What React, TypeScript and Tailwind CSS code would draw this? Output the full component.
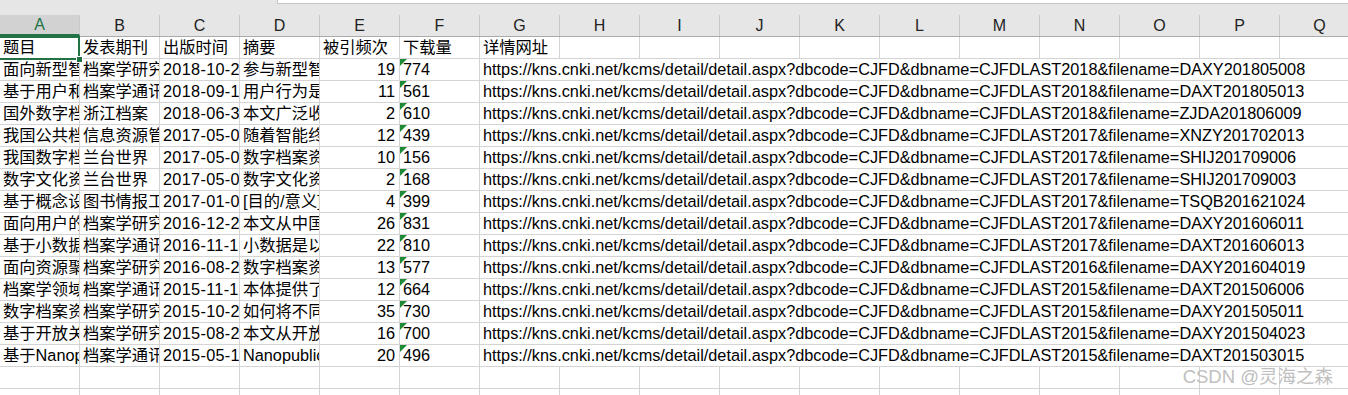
import React from "react";

const cols = ["A","B","C","D","E","F","G","H","I","J","K","L","M","N","O","P","Q"];

type Row = { a: string; b: string; c: string; d: string; e: string; f: string; g: string };

const base = "https://kns.cnki.net/kcms/detail/detail.aspx?dbcode=CJFD&dbname=CJFDLAST";
const rows: Row[] = [
  { a: "面向新型智慧", b: "档案学研究", c: "2018-10-25", d: "参与新型智慧", e: "19", f: "774", g: base + "2018&filename=DAXY201805008" },
  { a: "基于用户和", b: "档案学通讯", c: "2018-09-15", d: "用户行为是", e: "11", f: "561", g: base + "2018&filename=DAXT201805013" },
  { a: "国外数字档", b: "浙江档案", c: "2018-06-30", d: "本文广泛收集", e: "2", f: "610", g: base + "2018&filename=ZJDA201806009" },
  { a: "我国公共档", b: "信息资源管理", c: "2017-05-08", d: "随着智能终端", e: "12", f: "439", g: base + "2017&filename=XNZY201702013" },
  { a: "我国数字档", b: "兰台世界", c: "2017-05-01", d: "数字档案资源", e: "10", f: "156", g: base + "2017&filename=SHIJ201709006" },
  { a: "数字文化资源", b: "兰台世界", c: "2017-05-01", d: "数字文化资源", e: "2", f: "168", g: base + "2017&filename=SHIJ201709003" },
  { a: "基于概念设计", b: "图书情报工作", c: "2017-01-05", d: "[目的/意义]", e: "4", f: "399", g: base + "2017&filename=TSQB201621024" },
  { a: "面向用户的", b: "档案学研究", c: "2016-12-20", d: "本文从中国", e: "26", f: "831", g: base + "2017&filename=DAXY201606011" },
  { a: "基于小数据", b: "档案学通讯", c: "2016-11-15", d: "小数据是以", e: "22", f: "810", g: base + "2017&filename=DAXT201606013" },
  { a: "面向资源聚合", b: "档案学研究", c: "2016-08-20", d: "数字档案资源", e: "13", f: "577", g: base + "2016&filename=DAXY201604019" },
  { a: "档案学领域", b: "档案学通讯", c: "2015-11-15", d: "本体提供了", e: "12", f: "664", g: base + "2015&filename=DAXT201506006" },
  { a: "数字档案资源", b: "档案学研究", c: "2015-10-20", d: "如何将不同", e: "35", f: "730", g: base + "2015&filename=DAXY201505011" },
  { a: "基于开放关联", b: "档案学研究", c: "2015-08-20", d: "本文从开放", e: "16", f: "700", g: base + "2015&filename=DAXY201504023" },
  { a: "基于Nanopub", b: "档案学通讯", c: "2015-05-15", d: "Nanopublication", e: "20", f: "496", g: base + "2015&filename=DAXT201503015" },
];

const cell = "w-[80px] shrink-0 h-full border-r border-[#d4d4d4] overflow-hidden whitespace-nowrap flex items-center";

function TextCell({ children }: { children?: React.ReactNode }) {
  return <div className={cell + " pl-[3px]"}>{children}</div>;
}

function Triangle() {
  return (
    <svg className="absolute left-0 top-0" width="7" height="7" viewBox="0 0 7 7">
      <polygon points="0,0 7,0 0,7" fill="#1e8a35" />
    </svg>
  );
}

export default function App() {
  return (
    <div
      className="relative w-[1348px] h-[395px] overflow-hidden bg-white text-black"
      style={{ fontFamily: '"Liberation Sans", "Noto Sans CJK SC", sans-serif' }}
    >
      {/* formula bar remnant */}
      <div className="flex h-[4px]">
        <div className="w-[277px] bg-[#e6e6e6]" />
        <div className="flex-1 bg-white border-l border-b border-[#c6c6c6]" />
      </div>
      <div className="h-[11px] bg-[#e6e6e6]" />

      {/* column headers */}
      <div className="flex h-[22px] bg-[#e6e6e6] border-b border-[#ababab] text-[16px] text-[#222]">
        {cols.map((c, i) => (
          <div
            key={c}
            className={
              i === 0
                ? "w-[80px] shrink-0 h-full flex items-center justify-center bg-[#d2d2d2] text-[#217346] border-r border-[#c8c8c8] border-b-2 border-b-[#217346]"
                : "w-[80px] shrink-0 h-full flex items-center justify-center border-r border-[#c8c8c8]"
            }
          >
            {c}
          </div>
        ))}
      </div>

      {/* grid */}
      <div className="text-[16.3px] leading-none">
        {/* header row */}
        <div className="flex h-[22px] border-b border-[#d4d4d4]">
          <TextCell>题目</TextCell>
          <TextCell>发表期刊</TextCell>
          <TextCell>出版时间</TextCell>
          <TextCell>摘要</TextCell>
          <TextCell>被引频次</TextCell>
          <TextCell>下载量</TextCell>
          <TextCell>详情网址</TextCell>
          {cols.slice(7).map((c) => (
            <div key={c} className={cell} />
          ))}
        </div>
        {rows.map((r, i) => (
          <div key={i} className="flex h-[22px] border-b border-[#d4d4d4]">
            <TextCell>{r.a}</TextCell>
            <TextCell>{r.b}</TextCell>
            <div className={cell + " pl-[3px] tracking-[0.3px]"}>{r.c}</div>
            <TextCell>{r.d}</TextCell>
            <div className={cell + " justify-end pr-[4px]"}>{r.e}</div>
            <div className={cell + " relative pl-[3px]"}>
              <Triangle />
              {r.f}
            </div>
            <div className="flex-1 h-full overflow-visible whitespace-nowrap flex items-center pl-[3px]">
              {r.g}
            </div>
          </div>
        ))}
        {[0, 1].map((k) => (
          <div key={"e" + k} className="flex h-[22px] border-b border-[#d4d4d4]">
            {cols.map((c) => (
              <div key={c} className={cell} />
            ))}
          </div>
        ))}
      </div>

      {/* selected cell A1 */}
      <div className="absolute left-[-2px] top-[36px] w-[82px] h-[24px] border-2 border-[#217346]" />
      <div className="absolute left-[76px] top-[56px] w-[7px] h-[7px] bg-[#217346] border border-white" />

      {/* watermark */}
      <div
        className="absolute right-[15px] top-[368px] text-[18.5px] leading-none text-[#c0c0c0] whitespace-nowrap"
        style={{ fontFamily: '"Liberation Sans", "Noto Sans CJK SC", sans-serif' }}
      >
        CSDN @灵海之森
      </div>
    </div>
  );
}
